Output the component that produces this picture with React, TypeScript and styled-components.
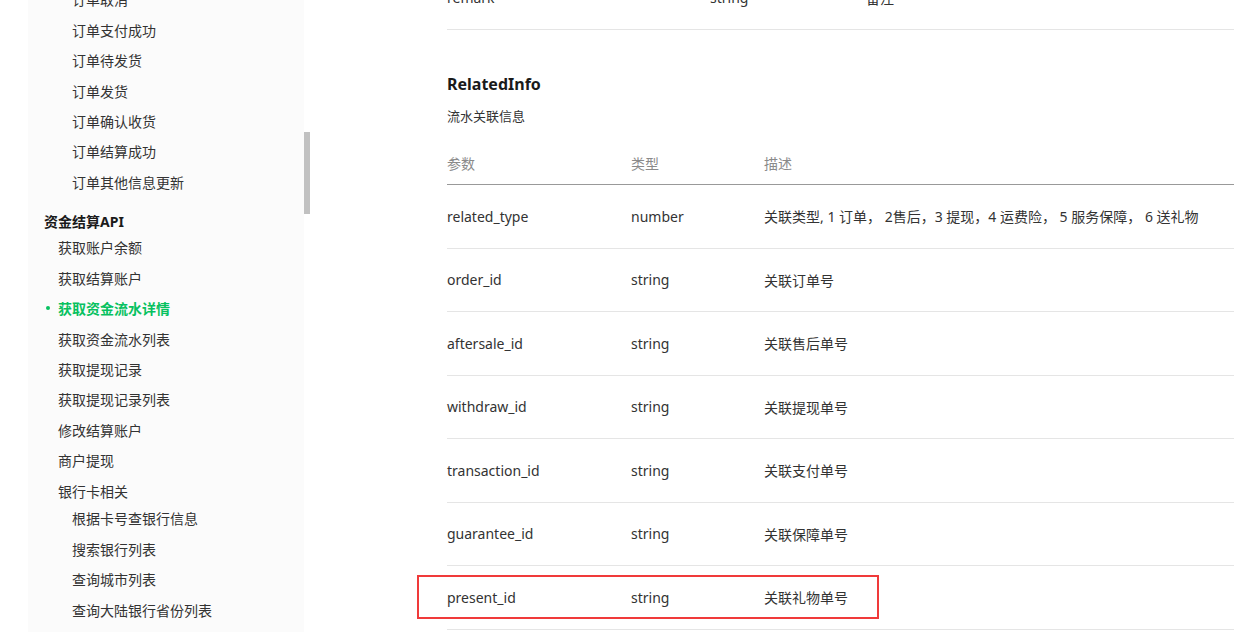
import React from "react";
import styled, { createGlobalStyle } from "styled-components";

const GlobalStyle = createGlobalStyle`
    html, body {
        margin: 0;
        padding: 0;
        background: #ffffff;
    }

    body {
        font-family: "Noto Sans", "Noto Sans CJK SC", sans-serif;
        color: #333333;
    }
`;

type NavEntry = {
    label: string;
    level: 1 | 2 | 3;
    active?: boolean;
    title?: boolean;
    nested?: boolean;
};

const navEntries: NavEntry[] = [
    { label: "订单取消", level: 3 },
    { label: "订单支付成功", level: 3 },
    { label: "订单待发货", level: 3 },
    { label: "订单发货", level: 3 },
    { label: "订单确认收货", level: 3 },
    { label: "订单结算成功", level: 3 },
    { label: "订单其他信息更新", level: 3 },
    { label: "资金结算API", level: 1, title: true },
    { label: "获取账户余额", level: 2 },
    { label: "获取结算账户", level: 2 },
    { label: "获取资金流水详情", level: 2, active: true },
    { label: "获取资金流水列表", level: 2 },
    { label: "获取提现记录", level: 2 },
    { label: "获取提现记录列表", level: 2 },
    { label: "修改结算账户", level: 2 },
    { label: "商户提现", level: 2 },
    { label: "银行卡相关", level: 2 },
    { label: "根据卡号查银行信息", level: 3, nested: true },
    { label: "搜索银行列表", level: 3 },
    { label: "查询城市列表", level: 3 },
    { label: "查询大陆银行省份列表", level: 3 },
];

const fields = [
    {
        name: "related_type",
        type: "number",
        desc: "关联类型, 1 订单， 2售后，3 提现，4 运费险， 5 服务保障， 6 送礼物",
    },
    { name: "order_id", type: "string", desc: "关联订单号" },
    { name: "aftersale_id", type: "string", desc: "关联售后单号" },
    { name: "withdraw_id", type: "string", desc: "关联提现单号" },
    { name: "transaction_id", type: "string", desc: "关联支付单号" },
    { name: "guarantee_id", type: "string", desc: "关联保障单号" },
    { name: "present_id", type: "string", desc: "关联礼物单号", marked: true },
];

const levelIndent = { 1: 44, 2: 58, 3: 72 };

export default function App() {
    return (
        <>
            <GlobalStyle />
            <Page>
                <Sidebar>
                    <NavList>
                        {navEntries.map((entry) =>
                            entry.title ? (
                                <GroupTitle key={entry.label}>{entry.label}</GroupTitle>
                            ) : (
                                <NavItem
                                    key={entry.label}
                                    $indent={levelIndent[entry.level]}
                                    $active={!!entry.active}
                                    $nested={!!entry.nested}
                                >
                                    {entry.label}
                                </NavItem>
                            )
                        )}
                    </NavList>
                </Sidebar>
                <ScrollTrack>
                    <ScrollThumb />
                </ScrollTrack>

                <Main>
                    {/* tail of the previous table, scrolled mostly out of view */}
                    <PrevTable>
                        <Row>
                            <NameCell $width={263}>remark</NameCell>
                            <TypeCell $width={156}>string</TypeCell>
                            <DescCell>备注</DescCell>
                        </Row>
                    </PrevTable>

                    <Heading>RelatedInfo</Heading>
                    <Subtitle>流水关联信息</Subtitle>

                    <HeaderRow>
                        <NameCell>参数</NameCell>
                        <TypeCell>类型</TypeCell>
                        <DescCell>描述</DescCell>
                    </HeaderRow>

                    {fields.map((field) => (
                        <Row key={field.name}>
                            <NameCell>{field.name}</NameCell>
                            <TypeCell>{field.type}</TypeCell>
                            <DescCell>{field.desc}</DescCell>
                            {field.marked && <Marker />}
                        </Row>
                    ))}
                </Main>
            </Page>
        </>
    );
}

const Page = styled.div`
    width: 1234px;
    height: 632px;
    overflow: hidden;

    display: flex;
    flex-direction: row;

    padding-left: 28px;
    box-sizing: border-box;
`;

const Sidebar = styled.nav`
    width: 276px;
    height: 100%;
    flex-shrink: 0;

    background-color: #fbfbfb;
    overflow: hidden;
`;

const NavList = styled.div`
    display: flex;
    flex-direction: column;

    margin-top: -16px;
`;

const NavItem = styled.div<{ $indent: number; $active: boolean; $nested: boolean }>`
    position: relative;
    height: 30.45px;

    display: flex;
    align-items: center;

    padding-left: ${({ $indent }) => $indent - 28}px;
    margin-top: ${({ $nested }) => ($nested ? "-3px" : "0")};

    color: #333333;
    font-size: 14px;
    font-weight: 400;
    white-space: nowrap;

    ${({ $active }) =>
        $active &&
        `
            color: #07c160;
            font-weight: 700;

            &::before {
                content: "";
                position: absolute;
                left: 18px;
                top: 50%;
                width: 4px;
                height: 4px;
                margin-top: -2px;
                border-radius: 50%;
                background-color: #07c160;
            }
    `};
`;

const GroupTitle = styled.div`
    height: 22px;

    display: flex;
    align-items: center;

    margin-top: 13px;
    padding-left: 16px;

    color: #1a1a1a;
    font-size: 14px;
    font-weight: 700;
`;

const ScrollTrack = styled.div`
    width: 6px;
    height: 100%;
    flex-shrink: 0;

    padding-top: 132px;
    box-sizing: border-box;
`;

const ScrollThumb = styled.div`
    width: 6px;
    height: 82px;

    background-color: #c1c1c1;
`;

const Main = styled.main`
    flex: 1;
    min-width: 0;

    display: flex;
    flex-direction: column;

    padding-left: 137px;
`;

const PrevTable = styled.div`
    width: 787px;
    margin-top: -33.5px;
`;

const Row = styled.div`
    position: relative;
    width: 787px;
    height: 63.5px;
    box-sizing: border-box;

    display: flex;
    align-items: center;

    border-bottom: 1px solid #e5e5e5;

    color: #333333;
    font-size: 14px;
`;

const HeaderRow = styled.div`
    width: 787px;
    height: 43px;
    box-sizing: border-box;

    display: flex;
    align-items: center;

    margin-top: 15px;

    border-bottom: 1px solid #999999;

    color: #8a8a8a;
    font-size: 14px;
`;

const NameCell = styled.div<{ $width?: number }>`
    width: ${({ $width }) => $width ?? 184}px;
    flex-shrink: 0;
    white-space: nowrap;
`;

const TypeCell = styled.div<{ $width?: number }>`
    width: ${({ $width }) => $width ?? 133}px;
    flex-shrink: 0;
    white-space: nowrap;
`;

const DescCell = styled.div`
    flex: 1;
    white-space: nowrap;
`;

const Heading = styled.h3`
    margin: 41.5px 0 0;

    color: #1a1a1a;
    font-size: 16px;
    font-weight: 700;
    line-height: 24px;
`;

const Subtitle = styled.div`
    margin-top: 9.5px;

    color: #333333;
    font-size: 13px;
    line-height: 22px;
`;

const Marker = styled.div`
    position: absolute;
    left: -30px;
    top: 9px;
    width: 462px;
    height: 44px;
    box-sizing: border-box;

    border: 2px solid #f03a3a;
    pointer-events: none;
`;
